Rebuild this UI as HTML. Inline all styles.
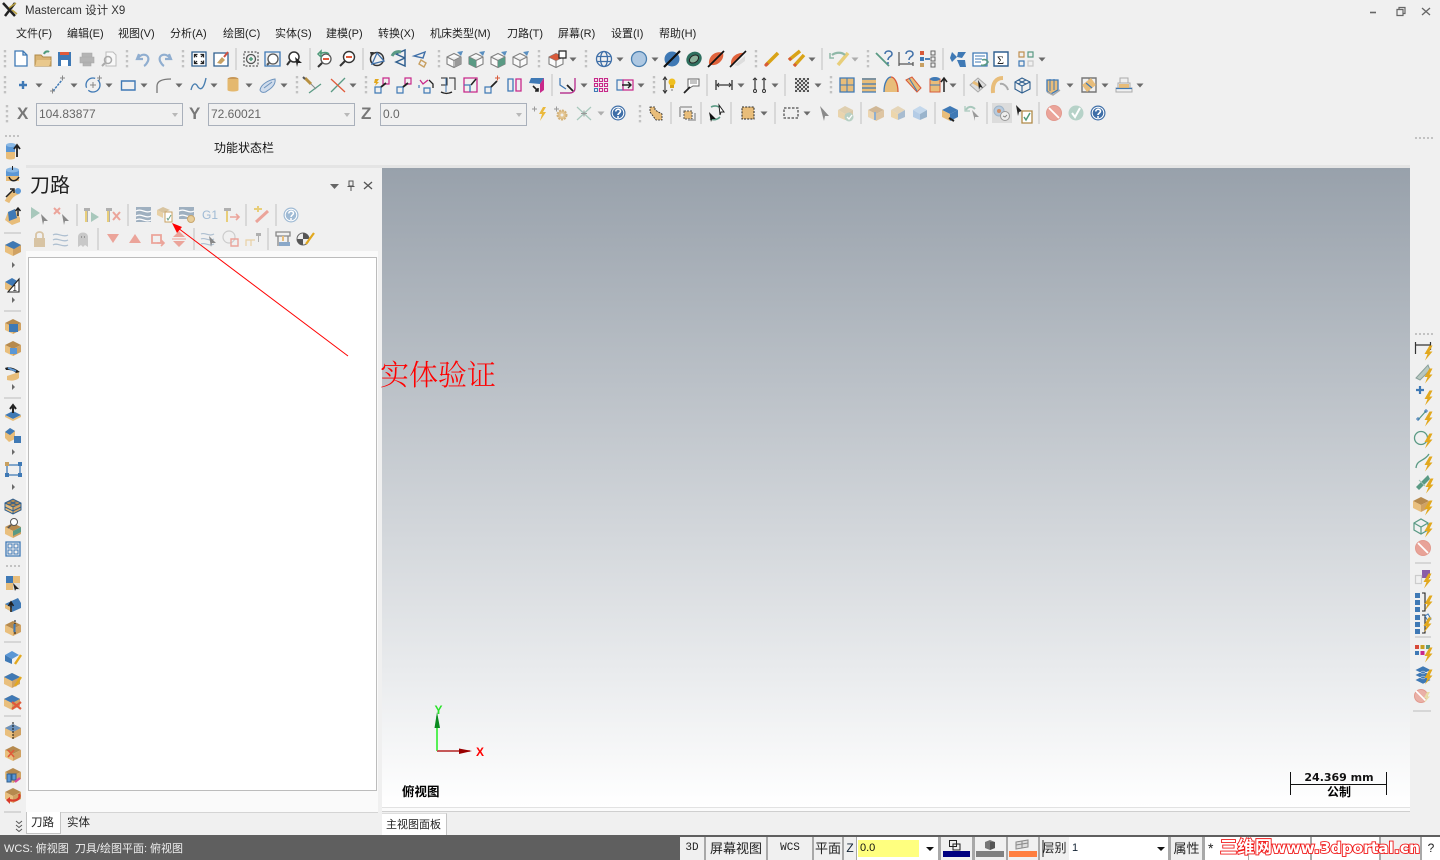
<!DOCTYPE html>
<html lang="zh"><head><meta charset="utf-8"><title>Mastercam</title>
<style>
html,body{margin:0;padding:0}
body{width:1440px;height:860px;overflow:hidden;background:#f0f0f0;position:relative;font-family:"Liberation Sans","Noto Sans CJK SC",sans-serif;font-size:11px;color:#222}
.a{position:absolute}
.t{position:absolute;white-space:nowrap;line-height:16px}
.m{top:26px;color:#222;font-size:11px}
.c{position:absolute;top:103px;height:21px;width:145px;border:1px solid #a9b0bb;background:#f0f0f0;color:#666;font-size:12px;line-height:21px;text-indent:2px}
.c:after{content:"";position:absolute;right:4px;top:9px;border:3.5px solid transparent;border-top:4px solid #b8b8b8}
.xyz{position:absolute;top:103px;font:bold 17px/22px "Liberation Sans",sans-serif;color:#777}
.b{position:absolute;top:837px;height:23px;background:#f0f0f0;color:#222;text-align:center;line-height:23px;font-size:12px;overflow:hidden}
</style></head><body>
<div class="a" style="left:0;top:165px;width:1440px;height:3px;background:#e4e4e4"></div>
<div class="a" style="left:0;top:165px;width:26px;height:670px;background:#f0f0f0"></div>
<div class="a" style="left:1410px;top:165px;width:30px;height:670px;background:#f0f0f0"></div>
<div class="a" style="left:382px;top:168px;width:1028px;height:639px;background:linear-gradient(#98a1ab,#fff)"></div>
<div class="a" style="left:382px;top:807px;width:1028px;height:1px;background:#e2e2e2"></div>
<div class="a" style="left:382px;top:808px;width:1028px;height:3px;background:#fbfbfb"></div>
<div class="a" style="left:382px;top:811px;width:1028px;height:1px;background:#cfcfcf"></div>
<div class="a" style="left:26px;top:251px;width:352px;height:561px;background:#fafafa"></div>
<div class="a" style="left:26px;top:812px;width:352px;height:1px;background:#d4d4d4"></div>
<div class="a" style="left:28px;top:257px;width:347px;height:532px;background:#fff;border:1px solid #bcbcbc"></div>
<div class="a" style="left:26px;top:812px;width:33px;height:21px;background:#fff;border:1px solid #c4c4c4;border-top:0"></div>
<div class="a" style="left:382px;top:813px;width:64px;height:22px;background:#fff;border-right:1px solid #c4c4c4;border-top:1px solid #ddd"></div>
<div class="a" style="left:0;top:835px;width:1440px;height:25px;background:#5f5f5f"></div>
<div class="a" style="left:680px;top:837px;width:760px;height:23px;background:#a8a8a8"></div>

<div class="t" style="left:25px;top:3px;font-size:11.5px;color:#333">Mastercam 设计 X9</div>
<div class="t m" style="left:16px">文件(F)</div><div class="t m" style="left:67px">编辑(E)</div><div class="t m" style="left:118px">视图(V)</div><div class="t m" style="left:170px">分析(A)</div><div class="t m" style="left:223px">绘图(C)</div><div class="t m" style="left:275px">实体(S)</div><div class="t m" style="left:326px">建模(P)</div><div class="t m" style="left:378px">转换(X)</div><div class="t m" style="left:430px">机床类型(M)</div><div class="t m" style="left:507px">刀路(T)</div><div class="t m" style="left:558px">屏幕(R)</div><div class="t m" style="left:611px">设置(I)</div><div class="t m" style="left:659px">帮助(H)</div>

<div class="xyz" style="left:17px">X</div><div class="c" style="left:36px">104.83877</div>
<div class="xyz" style="left:189px">Y</div><div class="c" style="left:208px">72.60021</div>
<div class="xyz" style="left:361px">Z</div><div class="c" style="left:380px">0.0</div>

<div class="t" style="left:214px;top:140px;font-size:12px;color:#111">功能状态栏</div>
<div class="t" style="left:30px;top:174px;font-size:20px;line-height:24px;color:#222">刀路</div>
<div class="t" style="left:31px;top:815px;font-size:11.5px">刀路</div>
<div class="t" style="left:67px;top:815px;font-size:11.5px">实体</div>
<div class="t" style="left:386px;top:817px;font-size:11px">主视图面板</div>
<div class="t" style="left:4px;top:841px;font-size:11px;color:#eee">WCS: 俯视图&nbsp; 刀具/绘图平面: 俯视图</div>

<div class="t" style="left:402px;top:784px;font-size:12.500px;font-weight:bold;color:#000">俯视图</div>
<div class="t" style="left:1291px;top:770px;width:96px;text-align:center;font-weight:bold;color:#111;font-family:'DejaVu Sans',sans-serif;font-size:11px">24.369 mm</div>
<div class="t" style="left:1291px;top:784px;width:96px;text-align:center;font-size:12px;font-weight:bold;color:#000">公制</div>
<div class="t" style="left:380px;top:355px;font-size:29px;line-height:38px;color:#f00;font-family:'Noto Serif CJK SC',serif;font-weight:300">实体验证</div>

<div class="b" style="left:680px;width:24px;font:11px/23px 'Liberation Mono',monospace">3D</div>
<div class="b" style="left:706px;width:60px;font-size:13px">屏幕视图</div>
<div class="b" style="left:768px;width:44px;font:11px/23px 'Liberation Mono',monospace">WCS</div>
<div class="b" style="left:814px;width:28px;font-size:13px">平面</div>
<div class="b" style="left:844px;width:12px;color:#123">Z</div>
<div class="b" style="left:857px;width:81px;background:#fff"></div>
<div class="b" style="left:858px;top:840px;height:17px;width:61px;background:#ffff7f;text-align:left;line-height:17px;text-indent:2px;font-size:11px;color:#111">0.0</div>
<div class="b" style="left:941px;width:31px"></div>
<div class="b" style="left:975px;width:31px"></div>
<div class="b" style="left:1008px;width:30px"></div>
<div class="b" style="left:1040px;width:29px;font-size:12px">层别</div>
<div class="b" style="left:1069px;width:99px;background:#fff;text-align:left;text-indent:3px;font-size:11px;color:#123">1</div>
<div class="b" style="left:1171px;width:31px;font-size:13px">属性</div>
<div class="b" style="left:1205px;width:43px;background:#fff;text-align:left;text-indent:3px;font-size:14px">*</div>
<div class="b" style="left:1249px;width:61px;background:#fff"></div>
<div class="b" style="left:1312px;width:67px;background:#fff"></div>
<div class="b" style="left:1381px;width:39px"></div>
<div class="b" style="left:1422px;width:18px;background:#fff">?</div>

<svg class="a" style="left:0;top:0" width="1440" height="860" viewBox="0 0 1440 860" fill="none">
<defs>
<path id="dd" d="M-3.5-1.5h7l-3.5 4z" fill="#6a6a6a"/>
<path id="dv" d="M0-9V10" stroke="#c2c2c2" stroke-width="2.4" stroke-dasharray="2.4 2.6"/>
<path id="sp" d="M0-11V11" stroke="#c8c8c8" stroke-width="1.2"/>
<path id="bolt" d="M1.500-7.500-3.500 1h3L-3 7.500 4.500-1.500H1.500L4.500-7.500z" fill="#e2a81e"/>
<g id="cube"><path d="M-8-3 0-7 8-3 0 1z" fill="#b68a4e"/><path d="M-8-3 0 1V8L-8 4z" fill="#e9bf7d"/><path d="M8-3 0 1V8L8 4z" fill="#d0a263"/></g>
<g id="wire"><path d="M-7-3 0-6.500 7-3V4L0 7.500-7 4zM-7-3 0 .5 7-3M0 .5V7.500" stroke="#808080" stroke-width="1.1" fill="#fafafa"/></g>
<g id="help"><circle r="7.500" fill="#3f6fa8"/><circle r="5.800" stroke="#fff"/><path d="M-2.200-1.500C-2.200-4.500 2.500-4.500 2.500-1.700 2.500 0 0 .2 0 2" stroke="#fff" stroke-width="1.600"/><circle cy="4" r="1" fill="#fff"/></g>
<g id="arr"><path d="M0-3 3 0 0 3" fill="#6a6a6a"/></g>
<g id="sq"><path d="M-6-6H6V6H-6z" stroke="#3f79b5" stroke-width="1.400"/></g>
<pattern id="ch" width="4" height="4" patternUnits="userSpaceOnUse" x="795" y="78"><rect width="4" height="4" fill="#ddd"/><rect width="2" height="2" fill="#555"/><rect x="2" y="2" width="2" height="2" fill="#555"/></pattern>
</defs>

<!-- logo + window controls -->
<path d="M3 3 15 16M15 3 5 16" stroke="#222" stroke-width="2.500"/><path d="M9 8 16 3M12 10 17 14" stroke="#b8a040" stroke-width="1.500"/>
<path d="M1370 12.500h6" stroke="#666" stroke-width="1.600"/>
<path d="M1397 9.500h6v6h-6zM1399 9.500V7.500h6v6h-2" stroke="#666" stroke-width="1.200"/>
<path d="M1422 8l8 7M1430 8l-8 7" stroke="#666" stroke-width="1.300"/>

<!-- separators toolbars -->
<g>
<use href="#dv" x="5" y="59"/><use href="#dv" x="127" y="59"/><use href="#dv" x="183" y="59"/><use href="#sp" x="236" y="59"/><use href="#sp" x="310" y="59"/><use href="#sp" x="363" y="59"/><use href="#dv" x="439" y="59"/><use href="#dv" x="539" y="59"/><use href="#dv" x="586" y="59"/><use href="#dv" x="756" y="59"/><use href="#sp" x="822" y="59"/><use href="#dv" x="868" y="59"/><use href="#sp" x="943" y="59"/>
<use href="#dv" x="5" y="85"/><use href="#dv" x="297" y="85"/><use href="#dv" x="366" y="85"/><use href="#sp" x="552" y="85"/><use href="#dv" x="654" y="85"/><use href="#sp" x="707" y="85"/><use href="#sp" x="785" y="85"/><use href="#dv" x="831" y="85"/><use href="#sp" x="964" y="85"/><use href="#sp" x="1037" y="85"/>
<use href="#dv" x="7" y="114"/><use href="#dv" x="640" y="114"/><use href="#sp" x="671" y="113"/><use href="#sp" x="701" y="113"/><use href="#sp" x="731" y="113"/><use href="#sp" x="775" y="113"/><use href="#sp" x="861" y="113"/><use href="#sp" x="935" y="113"/><use href="#sp" x="987" y="113"/><use href="#sp" x="1039" y="113"/>
</g>
<!-- dropdowns -->
<g>
<use href="#dd" x="573" y="59"/><use href="#dd" x="620" y="59"/><use href="#dd" x="655" y="59"/><use href="#dd" x="812" y="59"/><use href="#dd" x="855" y="59" opacity=".5"/><use href="#dd" x="1042" y="59"/>
<use href="#dd" x="39" y="85"/><use href="#dd" x="74" y="85"/><use href="#dd" x="109" y="85"/><use href="#dd" x="144" y="85"/><use href="#dd" x="179" y="85"/><use href="#dd" x="214" y="85"/><use href="#dd" x="249" y="85"/><use href="#dd" x="284" y="85"/><use href="#dd" x="353" y="85"/><use href="#dd" x="584" y="85"/><use href="#dd" x="641" y="85"/><use href="#dd" x="741" y="85"/><use href="#dd" x="775" y="85"/><use href="#dd" x="818" y="85"/><use href="#dd" x="953" y="85"/><use href="#dd" x="1070" y="85"/><use href="#dd" x="1105" y="85"/><use href="#dd" x="1140" y="85"/>
<use href="#dd" x="601" y="113" opacity=".5"/><use href="#dd" x="764" y="113"/><use href="#dd" x="807" y="113"/>
</g>

<!-- row 1 -->
<path d="M15 51H23L27 55V66H15ZM23 51V55H27" fill="#fff" stroke="#3f79b5" stroke-width="1.300"/>
<path d="M35 55h6l2 2h8v9H35z" fill="#d9b474" stroke="#b08a48"/><path d="M37 60H51L49 66H35z" fill="#e9c88c"/><path d="M44 54C45 51 48 51 49 52" stroke="#4f9a7a" stroke-width="2"/>
<path d="M58 52H71V66H58z" fill="#3f79b5"/><path d="M60 52H69V55H60z" fill="#e05a3a"/><path d="M61 60H68V66H61z" fill="#fff"/>
<path d="M82 53H92V57H82zM80 57H94V63H80zM83 62H91V66H83z" fill="#b4b4b4" stroke="#a8a8a8" stroke-width=".6"/>
<path d="M108 52H113L116 55V66H106V52z" stroke="#bbb" fill="#f8f8f8"/><circle cx="108" cy="60" r="3.500" stroke="#aaa" stroke-width="1.500"/><path d="M105 63 102 66" stroke="#aaa" stroke-width="2"/>
<path d="M139 54 137 59 143 59M138 58C143 52 150 55 148 61 147 63 146 65 144 66" stroke="#90aed0" stroke-width="2.200"/>
<path d="M169 54 171 59 165 59M170 58C165 52 158 55 160 61 161 63 162 65 164 66" stroke="#90aed0" stroke-width="2.200"/>
<path d="M192 52H206V66H192z" fill="#fff" stroke="#2f5f8f" stroke-width="1.300"/><path d="M195 55l2 2M203 55l-2 2M195 63l2-2M203 63l-2-2" stroke="#222" stroke-width="1.200"/><path d="M194.500 57.500v-3h3M203.500 57.500v-3h-3M194.500 60.500v3h3M203.500 60.500v3h-3" stroke="#222" stroke-width="1.300"/>
<path d="M214 53H228V66H214z" fill="#fff" stroke="#2f5f8f" stroke-width="1.300"/><path d="M217 63 222 57 225 60 221 64z" fill="#c8a062"/><path d="M224 57 228 52" stroke="#d05040" stroke-width="2"/>
<path d="M244 52H258V66H244z" stroke="#333" stroke-dasharray="2 1.500"/><circle cx="251" cy="59" r="4.500" stroke="#555" stroke-width="1.300"/><path d="M249 59h4M251 57v4" stroke="#4f9a7a" stroke-width="1.500"/>
<path d="M265 52H280V66H265z" stroke="#3f79b5" stroke-width="1.300"/><circle cx="273" cy="59" r="5" stroke="#555" stroke-width="1.300" fill="#fff"/><path d="M269 63 267 65" stroke="#555" stroke-width="2"/>
<circle cx="294" cy="57" r="5" stroke="#333" stroke-width="1.500" fill="#fff"/><path d="M290 61 287 65" stroke="#333" stroke-width="2"/><path d="M295 57 302 63 298 63 297 67z" fill="#222"/>
<circle cx="326" cy="59" r="5" stroke="#555" stroke-width="1.300" fill="#fff"/><path d="M323 59h6" stroke="#e05a3a" stroke-width="2"/><path d="M318 54 321 51V57z M320 54C323 52 327 52 329 54" stroke="#4f9a7a" stroke-width="1.500"/><path d="M322 63 318 67" stroke="#333" stroke-width="2"/>
<circle cx="349" cy="57" r="5.500" stroke="#333" stroke-width="1.400" fill="#fff"/><path d="M346 57h6" stroke="#e05a3a" stroke-width="2"/><path d="M345 61 340 66" stroke="#333" stroke-width="2"/>
<circle cx="377" cy="59" r="6.500" stroke="#333" stroke-width="1.500"/><path d="M372 64 377 53 384 61z" fill="#f0f0f0" stroke="#3f6fa8" stroke-width="1.300"/><path d="M370 52 374 52 371 56z" fill="#333"/>
<path d="M396 54 405 50 405 58zM396 62 405 58 405 66z" fill="#f0f0f0" stroke="#2f5f8f" stroke-width="1.500"/><path d="M392 56C394 52 397 51 401 52" stroke="#5a9a84" stroke-width="3"/>
<path d="M414 56 425 52 423 58z" stroke="#3f6fa8" stroke-width="1.400"/><path d="M421 60 426 63 424 67 419 64z" stroke="#c8a062" stroke-width="1.400"/>
<g transform="translate(454,60)"><use href="#wire"/><path d="M1 .5 7-3V4L1 7z" fill="#999"/><path d="M3-8 9-9 7-4z" fill="#5a8fc0"/></g>
<g transform="translate(476,60)"><use href="#wire"/><path d="M-7-3 0 .5V7.500L-7 4z" fill="#5a9a84"/><path d="M3-8 9-9 7-4z" fill="#5a8fc0"/></g>
<g transform="translate(498,60)"><use href="#wire"/><path d="M0 .5 7-3V4L0 7.500z" fill="#5a9a84"/><path d="M3-8 9-9 7-4z" fill="#5a8fc0"/></g>
<g transform="translate(520,60)"><use href="#wire"/><path d="M3-8 9-9 7-4z" fill="#5a8fc0"/></g>
<g transform="translate(556,60)"><use href="#wire"/><path d="M-7-3 0-6.500 7-3 0 .5z" fill="#d85a3a"/></g><path d="M559 51H566V58H559z" fill="#fff" stroke="#222" stroke-width="1.200"/>
<g transform="translate(604,59)" stroke="#3f6fa8" stroke-width="1.300"><circle r="7.500"/><ellipse rx="3.500" ry="7.500"/><path d="M-7-2.500H7M-7 2.500H7"/></g>
<circle cx="639" cy="59" r="7.500" fill="#aec8e2" stroke="#4a7fb0" stroke-width="1.300"/>
<circle cx="672" cy="59" r="7.500" fill="#3f79b5"/><path d="M664 67 680 51" stroke="#111" stroke-width="2.200"/>
<ellipse cx="694" cy="59" rx="8" ry="7" fill="#2f6f5f" transform="rotate(-35 694 59)"/><ellipse cx="694" cy="59" rx="5" ry="3.500" fill="#8ab09a" stroke="#222" transform="rotate(-35 694 59)"/>
<path d="M709 64C708 56 716 50 723 53 725 60 716 68 709 64z" fill="#e0633c"/><path d="M708 67 724 51" stroke="#111" stroke-width="1.800"/>
<path d="M731 63C731 56 738 52 745 53L731 65z" fill="#e0633c"/><path d="M745 56V61L738 66 734 65z" fill="#ddd"/><path d="M730 67 746 51" stroke="#111" stroke-width="1.600"/>
<path d="M766 65 778 53" stroke="#d9a317" stroke-width="3.500"/><path d="M765 66 768 63" stroke="#d85a3a" stroke-width="3"/>
<path d="M789 60 800 51M794 66 804 55" stroke="#d9a317" stroke-width="3.500"/><path d="M789 60 791 58M794 66 796 64" stroke="#d85a3a" stroke-width="3"/>
<path d="M838 65 848 53" stroke="#e8ce7a" stroke-width="3.500"/><path d="M832 55C836 52 842 52 845 55" stroke="#8fb8a8" stroke-width="2.200"/><path d="M830 53v5h4" stroke="#8fb8a8" stroke-width="1.500"/>
<path d="M876 53 889 66" stroke="#5a9a84" stroke-width="1.800"/><path d="M885 54C885 50 892 50 892 54 892 57 888 56 888 60M888 62v2" stroke="#3f6fa8" stroke-width="1.500"/>
<path d="M899 52V66M899 64H913M913 62V66M899 62" stroke="#555" stroke-width="1.200"/><path d="M906 54C906 50 913 50 913 54 913 57 909 56 909 60M909 62v1" stroke="#3f6fa8" stroke-width="1.500"/>
<path d="M920 51H924V55H920z" fill="#d85a3a"/><path d="M920 57H924V61H920z" fill="#3f79b5"/><path d="M920 63H924V67H920z" fill="#c8a062"/><path d="M925 59H930" stroke="#3f79b5" stroke-width="1.800"/><path d="M931 51H935V55H931zM931 57H935V61H931zM931 63H935V67H931z" stroke="#666"/>
<path d="M952 52 957 57 952 62 950 58zM958 52 966 52 962 58 957 57zM957 60 965 60 966 67 960 67z" fill="#3f79b5"/>
<path d="M973 53H987V66H973z" stroke="#3f79b5" stroke-width="1.300" fill="#fff"/><path d="M975 56H985M975 59H982M975 62H981" stroke="#3f79b5"/><path d="M982 60C985 59 987 60 988 62 986 65 984 66 981 65" stroke="#5a9a84" stroke-width="1.600"/>
<path d="M994 52H1008V66H994z" stroke="#2f5f8f" stroke-width="1.400" fill="#fff"/><text x="997" y="64" font-family="Liberation Serif" font-size="12" fill="#222">Σ</text>
<path d="M1019 52H1024V57H1019z" stroke="#c09050" stroke-width="1.200"/><path d="M1028 52H1033V57H1028z" stroke="#5a9a84" stroke-width="1.200"/><path d="M1019 61H1024V66H1019z" stroke="#3f79b5" stroke-width="1.200"/><path d="M1028 61H1033V66H1028z" stroke="#c8c8c8" stroke-width="1.200"/>

<!-- row 2 -->
<path d="M19 85h8M23 81v8" stroke="#3f79b5" stroke-width="2.400"/>
<path d="M53 91 62 80" stroke="#3f79b5" stroke-width="1.500" stroke-dasharray="2.500 1"/><path d="M60 78h5M62.500 75.500v5M50 91h5M52.500 88.500v5" stroke="#888"/>
<circle cx="93" cy="85" r="7" stroke="#3f79b5" stroke-width="1.300" stroke-dasharray="16 3"/><path d="M90 85h6M93 82v6" stroke="#888"/><path d="M97 78h5M99.500 75.500v5" stroke="#888"/>
<path d="M121.500 81H135V90H121.500z" stroke="#3f79b5" stroke-width="1.400"/>
<path d="M157 93V86C157 82 161 79 171 79" stroke="#777" stroke-width="1.300"/>
<path d="M191 90C193 82 196 83 198 87 201 91 204 88 206 78" stroke="#4a7fb0" stroke-width="1.400"/>
<ellipse cx="233" cy="79" rx="5.500" ry="2" fill="#c89858"/><path d="M227.500 79V90C227.500 92 238.500 92 238.500 90V79z" fill="#e4b86e"/>
<path d="M260 90C261 84 269 80 275 79 276 84 272 88 267 91 265 93 261 93 260 90z" fill="#d0dcec" stroke="#6d93bd"/><path d="M264 88 272 82" stroke="#6d93bd"/>
<path d="M305 78 311 84" stroke="#b89040" stroke-width="3"/><path d="M303 77 305 79" stroke="#555" stroke-width="2"/><path d="M309 93 321 84" stroke="#5a9a84" stroke-width="1.300"/><path d="M311 84 316 89" stroke="#888"/>
<path d="M331 92 345 78" stroke="#5a9a84" stroke-width="1.300"/><path d="M331 79 345 92" stroke="#e05a3a" stroke-width="1.300"/>
<path d="M375 79l-1 4h2l-1 3 4-4h-2l2-3z" fill="#e2a81e"/><path d="M383 78H389V84H383z" stroke="#c8288a" stroke-width="1.200"/><path d="M375 87H381V93H375z" stroke="#3f79b5" stroke-width="1.200"/><path d="M381 87 386 83" stroke="#222" stroke-width="1.800"/>
<path d="M405 78H411V84H405z" stroke="#c8288a" stroke-width="1.200"/><path d="M397 87H403V93H397z" stroke="#3f79b5" stroke-width="1.200"/><path d="M403 87 408 83" stroke="#222" stroke-width="1.800"/>
<path d="M420 80 423 84 428 80" stroke="#c8288a" stroke-width="1.300"/><path d="M424 88H430V93H424zM419 85 419 88" stroke="#3f79b5" stroke-width="1.200"/><path d="M429 80 433 84V88" stroke="#222" stroke-width="1.300"/>
<path d="M441 78H447V85H441M449 78H455V90" stroke="#222"/><path d="M446 78V92" stroke="#3f79b5"/><path d="M441 92C445 94 448 94 452 92" stroke="#222" stroke-width="1.500"/>
<path d="M464 78H477V92H464z" stroke="#c8288a" stroke-width="1.300"/><path d="M464 85H470V92" stroke="#3f79b5" stroke-width="1.300"/><path d="M471 85 476 79" stroke="#222" stroke-width="1.500"/>
<path d="M485 87H491V93H485z" stroke="#3f79b5" stroke-width="1.200"/><path d="M491 87 497 81" stroke="#222" stroke-width="1.800"/><path d="M495 78h5M497.500 75.500v5" stroke="#d85a3a"/>
<path d="M508 79H513V91H508z" stroke="#3f79b5" stroke-width="1.300"/><path d="M516 79H521V91H516z" stroke="#c8288a" stroke-width="1.300"/>
<path d="M531 78 544 78 540 84 529 83z" fill="#3f79b5"/><path d="M544 78V90L540 93V84z" fill="#c8288a"/><path d="M533 86 538 91M538 88v3h-3" stroke="#222" stroke-width="1.600"/>
<path d="M560 78V85L566 89M575 78V88C575 91 573 93 570 93H560" stroke="#3f79b5" stroke-width="1.200"/><path d="M575 78V88C575 91 573 93 570 93H560" stroke="#c8288a" stroke-width="1.200"/><path d="M567 85 573 91" stroke="#222" stroke-width="1.800"/>
<g stroke="#c8288a" stroke-width="1.100"><path d="M594.500 78.500h3v3h-3zM599.500 78.500h3v3h-3zM604.500 78.500h3v3h-3zM594.500 83.500h3v3h-3zM599.500 83.500h3v3h-3zM604.500 83.500h3v3h-3zM599.500 88.500h3v3h-3zM604.500 88.500h3v3h-3z"/><path d="M594.500 88.500h3v3h-3z" stroke="#3f79b5"/></g>
<path d="M617 80H623V90H617z" stroke="#3f79b5" stroke-width="1.200"/><path d="M623 80H633V90H623z" stroke="#c8288a" stroke-width="1.200"/><path d="M622 85H631M628 82 631 85 628 88" stroke="#222" stroke-width="1.400"/>
<path d="M665 78V92M663 80 665 77 667 80M663 90 665 93 667 90" stroke="#333" stroke-width="1.100"/><circle cx="672" cy="82" r="3.500" fill="#f0c020"/><path d="M670 85h4V88h-4z" fill="#d9a317"/><path d="M671 90h2" stroke="#777"/>
<path d="M688 79H699V86H693L688 89z" stroke="#666" fill="#fff"/><path d="M690 81h7M690 83h7" stroke="#888"/><path d="M684 93 690 87" stroke="#222" stroke-width="1.800"/>
<path d="M716 80V90M732 80V90M717 85H731" stroke="#333" stroke-width="1.300"/><path d="M719 83 717 85 719 87M729 83 731 85 729 87" stroke="#333"/>
<path d="M755 78V92M764 78V92" stroke="#333" stroke-width="1.200"/><circle cx="755" cy="91" r="1.500" fill="#fff" stroke="#333"/><circle cx="764" cy="91" r="1.500" fill="#fff" stroke="#333"/><path d="M753 80 755 78 757 80M762 80 764 78 766 80" stroke="#333"/>
<path d="M795 78H809V92H795z" fill="url(#ch)"/>
<path d="M840 78H854V92H840z" fill="#e8bd7a" stroke="#3f79b5" stroke-width="1.300"/><path d="M847 78V92M840 85H854" stroke="#3f79b5"/>
<path d="M862 78H876V92H862z" fill="#e8bd7a"/><path d="M862 79H876M862 84H876M862 88H876M862 92H876" stroke="#3f79b5" stroke-width="1.300"/>
<path d="M884 92C884 82 888 77 891 77 894 77 898 82 898 92z" fill="#e8bd7a"/><path d="M884 92C884 82 888 77 891 77" stroke="#3f79b5" stroke-width="1.300"/><path d="M891 77C894 77 898 82 898 92" stroke="#d85a3a" stroke-width="1.300"/>
<path d="M906 80 912 77 921 88 917 92z" fill="#e8bd7a" stroke="#d85a3a"/><path d="M909 78 917 91" stroke="#3f79b5"/>
<path d="M930 79H940V92H930z" fill="#e8bd7a" stroke="#d85a3a"/><ellipse cx="935" cy="79" rx="5" ry="2" fill="#3f79b5"/><path d="M930 85H940" stroke="#3f79b5"/><path d="M944 92V79M941 82 944 78 947 82" stroke="#222" stroke-width="1.500"/>
<path d="M970 85 978 78 986 85 978 92z" fill="#ddd" stroke="#aaa"/><path d="M973 82 980 86" stroke="#e8bd7a" stroke-width="3"/><path d="M978 80 983 88 980 87 979 90z" fill="#222"/>
<path d="M993 93C992 83 996 78 1003 78" stroke="#e8bd7a" stroke-width="4"/><path d="M1000 84C1003 83 1007 86 1008 90" stroke="#aaa" stroke-width="2"/>
<path d="M1015 82 1022 78 1030 82V89L1022 93 1015 89zM1015 82 1022 86 1030 82M1022 86V93M1018 80 1026 84M1026 80 1018 84" stroke="#2f5f8f" stroke-width="1.100"/>
<path d="M1047 80H1058V90L1051 94 1047 91z" fill="#e8bd7a" stroke="#3f79b5" stroke-width="1.300"/><path d="M1050 79V91M1054 79V90" stroke="#3f79b5"/><path d="M1047 92 1053 95 1060 90" stroke="#aaa" stroke-width="1.500"/>
<path d="M1082 78H1096V92H1082z" stroke="#777" stroke-width="1.400"/><path d="M1082 85H1096M1089 78V92" stroke="#777"/><path d="M1082 85 1091 78 1096 85 1087 92z" fill="#e8bd7a"/><path d="M1086 83 1092 88" stroke="#3f79b5" stroke-width="1.200"/>
<path d="M1120 78H1128V83H1120zM1118 83H1130V88H1118zM1116 88H1132V92H1116z" stroke="#aaa"/><path d="M1119 84H1129V88H1119z" fill="#e8bd7a"/><path d="M1116 88.500H1132" stroke="#3f79b5" stroke-width="1.200"/>

<!-- row 3 -->
<path d="M532 109h5M534.500 106.500v5" stroke="#999"/><path d="M543 107 539 114h3l-2 7 6-9h-3l3-5z" fill="#eab93d"/>
<path d="M554 109h5M556.500 106.500v5" stroke="#999"/><circle cx="562" cy="115" r="4.500" fill="#e3c592" stroke="#d4b27a" stroke-width="2" stroke-dasharray="2 1"/><circle cx="562" cy="115" r="1.500" fill="#f0f0f0"/>
<path d="M577 107 591 120M591 107 577 120" stroke="#a8c8bc" stroke-width="1.200"/><path d="M581 113.500h6M584 110.500v6" stroke="#999"/>
<use href="#help" x="618" y="113"/>
<path d="M650 107H655V110L662 114V120H656L650 112z" fill="#e8bd7a" stroke="#222" stroke-width=".8" stroke-dasharray="2 1"/>
<path d="M680 107H692M680 107V117" stroke="#aaa" stroke-width="1.800"/><path d="M684 111H692V119H684z" fill="#e8bd7a" stroke="#555" stroke-dasharray="2 1"/><path d="M695 113V120H688" stroke="#aaa" stroke-width="1.800"/>
<path d="M711 107C715 105 719 106 721 109" stroke="#5a9a84" stroke-width="1.600"/><path d="M720 117C717 120 713 120 710 119" stroke="#5a9a84" stroke-width="1.600"/><path d="M709 112 716 119 712 119 711 122z" fill="#111"/><path d="M719 105 724 112 721 112 720 115z" fill="#fff" stroke="#222"/>
<path d="M742 107H754V119H742z" fill="#e8bd7a" stroke="#222" stroke-dasharray="2 1.200"/>
<path d="M784 108H798V118H784z" stroke="#222" stroke-dasharray="2.500 1.500"/>
<path d="M820 106 829 116 825 116 824 121z" fill="#8a8a8a"/>
<path d="M838 110 845 106 853 110 845 114z" fill="#dfcfb0"/><path d="M838 110 845 114V120L838 117z" fill="#e9d4ad"/><path d="M853 110 845 114V120L853 117z" fill="#d9c8a8"/><circle cx="849" cy="117" r="4.500" fill="#b8d0c4"/><path d="M847 117 849 119 852 115" stroke="#fff" stroke-width="1.300"/>
<g transform="translate(876,113)" opacity=".55"><use href="#cube"/><path d="M-1-1V7" stroke="#3f79b5" stroke-width="2"/></g>
<g transform="translate(898,113)"><path d="M-7-3 0-7 7-3 0 1z" fill="#e5d5b8"/><path d="M-7-3 0 1V7L-7 4z" fill="#ecd6ac"/><path d="M7-3 0 1V7L7 4z" fill="#a8bcd0"/></g>
<g transform="translate(920,113)"><path d="M-7-3 0-7 7-3 0 1z" fill="#c4d8ec"/><path d="M-7-3 0 1V7L-7 4z" fill="#b4cce6"/><path d="M7-3 0 1V7L7 4z" fill="#9ab4cc"/></g>
<g transform="translate(950,113)"><path d="M-8-3 0-7 8-3 0 1z" fill="#3f79b5"/><path d="M-8-3 0 1V8L-8 4z" fill="#e8bd7a"/><path d="M8-3 0 1V8L8 4z" fill="#3f79b5"/><path d="M-1 5 4 8" stroke="#222" stroke-width="2"/></g>
<path d="M966 110C968 106 972 106 975 109" stroke="#a8c8bc" stroke-width="2"/><path d="M965 106v5h5" stroke="#a8c8bc" stroke-width="1.200"/><path d="M972 110 979 117 975 117 975 121z" fill="#999"/>
<rect x="992" y="103" width="20" height="20" fill="#dcdcdc"/><circle cx="999" cy="111" r="5" fill="#b8cadc" stroke="#9fb4c8"/><circle cx="999" cy="111" r="2" fill="#d08f68"/><circle cx="1005" cy="116" r="4.500" fill="#eee" stroke="#999"/><path d="M1003 116l2 1 2-2" stroke="#888"/>
<path d="M1016 105 1022 111 1019 112 1018 116z" fill="#222"/><path d="M1022 111H1032V123H1022z" fill="#fff" stroke="#b08a48" stroke-width="1.300"/><path d="M1024 117 1026 120 1030 113" stroke="#4f9a7a" stroke-width="1.500"/>
<circle cx="1054" cy="113" r="7.500" fill="#eba49a" stroke="#e2998e"/><path d="M1049 108 1059 118" stroke="#fff" stroke-width="1.800"/>
<circle cx="1076" cy="113" r="7.500" fill="#b6d2c8"/><path d="M1072 113 1075 117 1080 108" stroke="#fff" stroke-width="2"/>
<use href="#help" x="1098" y="113"/>

<!-- panel controls -->
<path d="M330 184h9l-4.500 5z" fill="#666"/>
<path d="M349 181H353V186H349zM347.500 186.500h7M351 187V191" stroke="#555"/>
<path d="M364 182 372 189M372 182 364 189" stroke="#555" stroke-width="1.300"/>

<!-- panel row1 -->
<g><use href="#sp" x="77" y="215"/><use href="#sp" x="128" y="215"/><use href="#sp" x="246" y="215"/><use href="#sp" x="276" y="215"/><use href="#sp" x="98" y="239"/><use href="#sp" x="194" y="239"/><use href="#sp" x="268" y="239"/></g>
<path d="M31 207V219L40 213z" fill="#a8c8bc"/><path d="M41 214 48 221 44 221 43 225z" fill="#888"/>
<path d="M54 208 60 214M60 208 54 214" stroke="#eba49a" stroke-width="2"/><path d="M62 214 69 221 65 221 64 225z" fill="#888"/>
<path d="M84 208H90V211H88V222H86V211H84z" fill="#b0b0b0"/><path d="M86 211V222" stroke="#e8ce7a" stroke-width="2"/><path d="M91 212V222L99 217z" fill="#a8c8bc"/>
<path d="M106 208H112V211H110V222H108V211H106z" fill="#b0b0b0"/><path d="M108 211V222" stroke="#e8ce7a" stroke-width="2"/><path d="M113 212 120 220M120 212 113 220" stroke="#eba49a" stroke-width="2"/>
<path d="M136 207H151V222H136z" fill="#9fb0c0"/><path d="M136 211C141 208 146 214 151 211M136 216C141 213 146 219 151 216M136 220C141 217 146 223 151 220" stroke="#fff" stroke-width="1.200"/>
<path d="M157 210 163 207 170 210 163 213z" fill="#d8c4a0"/><path d="M157 210 163 213V218L157 215z" fill="#e8d0a4"/><path d="M165 212H172V222H165z" fill="#fff" stroke="#c8a060"/><path d="M167 218 168 220 171 215" stroke="#6aa08a"/>
<path d="M179 207H194V219H179z" fill="#9fb0c0"/><path d="M179 211C184 208 189 214 194 211M179 216C184 213 189 219 194 216" stroke="#fff" stroke-width="1.200"/><circle cx="191" cy="219" r="3.500" fill="#e8ce9a" stroke="#caa76e"/>
<text x="202" y="219" font-family="Liberation Sans" font-size="12" fill="#9fbad4">G1</text>
<path d="M224 208H231V211H228V222H226V211H224z" fill="#b0b0b0"/><path d="M227 211V222" stroke="#e8ce7a" stroke-width="2"/><path d="M230 217H238M236 214 239 217 236 220" stroke="#eba49a" stroke-width="1.600"/>
<path d="M256 222 268 211" stroke="#eba49a" stroke-width="3"/><path d="M254 209H262M258 206V212" stroke="#e8ce7a" stroke-width="2"/>
<circle cx="291" cy="215" r="7.500" fill="#9fbad4"/><circle cx="291" cy="215" r="5.800" stroke="#fff"/><path d="M288.800 213.500C288.800 210.500 293.500 210.500 293.500 213.300 293.500 215 291 215.200 291 217" stroke="#fff" stroke-width="1.500"/><circle cx="291" cy="219" r="1" fill="#fff"/>
<!-- panel row2 -->
<path d="M34 238H45V247H34z" fill="#d8c4a4"/><path d="M36 238V235C36 231 43 231 43 235V238" stroke="#d8c4a4" stroke-width="1.800"/>
<path d="M53 235C57 232 63 238 68 235M53 240C57 237 63 243 68 240M53 245C57 242 63 248 68 245" stroke="#aebfd0" stroke-width="1.200"/>
<path d="M78 247V237C78 231 88 231 88 237V247L85 245 83 247 81 245z" fill="#c8c8c8"/><path d="M81 237h1M84 237h1" stroke="#666"/>
<path d="M107 234H119L113 243z" fill="#eba49a"/>
<path d="M129 243H141L135 234z" fill="#eba49a"/>
<path d="M152 235H161V243H152z" stroke="#eba49a" stroke-width="1.800"/><path d="M157 243H163M161 240 164 243 161 246" stroke="#eba49a" stroke-width="1.600"/>
<path d="M173 237 179 231 185 237zM173 241 179 247 185 241z" fill="#eba49a"/><path d="M172 239H186" stroke="#eba49a"/>
<path d="M201 234C205 232 209 237 214 234M201 239C205 237 209 242 214 239M201 244C205 242 209 247 214 244" stroke="#aebfd0" stroke-width="1.200"/><path d="M209 236 216 243 212 243 211 247z" fill="#888"/>
<circle cx="229" cy="237" r="6" stroke="#ccc" stroke-width="1.200"/><path d="M231 239H238V246H231z" stroke="#eba49a" stroke-width="1.400"/>
<path d="M246 246V240H255M251 240V246" stroke="#e8d0a4" stroke-width="1.200"/><path d="M256 233H261V236H259V242H258V236H256z" fill="#b0b0b0"/>
<path d="M276 232H290V236H276zM278 236V246M288 236V246" stroke="#888" stroke-width="1.300"/><path d="M279 246H290V242H279z" fill="#8aa8c8"/><path d="M283 236 283 241" stroke="#e8bd7a" stroke-width="2"/>
<circle cx="303" cy="239" r="6" fill="#eee" stroke="#666"/><path d="M303 233A6 6 0 0 1 309 239H303V245A6 6 0 0 1 297 239H303z" fill="#555"/><path d="M306 244 314 233" stroke="#e2a81e" stroke-width="2.200"/>

<!-- left toolbar -->
<g>
<path d="M5 136h14" stroke="#c2c2c2" stroke-width="2" stroke-dasharray="2 2"/>
<path d="M6 145V158C6 160 15 160 15 158V145z" fill="#e8bd7a"/><path d="M6 145V152H15V145z" fill="#5b97d5"/><ellipse cx="11" cy="145" rx="5" ry="2" fill="#8ab8e4"/><path d="M17 157V146M14 149 17 145 20 149" stroke="#222" stroke-width="1.800"/>
<path d="M6 170V181H19V170z" fill="#e8bd7a"/><path d="M6 170V176H19V170z" fill="#5b97d5"/><ellipse cx="12.500" cy="170" rx="6.500" ry="2.500" fill="#8ab8e4"/><path d="M9 177C11 182 16 182 19 177" stroke="#222" stroke-width="1.500"/><path d="M12.500 166V170" stroke="#222"/>
<path d="M7 202C10 196 14 193 18 192" stroke="#e8bd7a" stroke-width="5"/><circle cx="18" cy="191" r="3" fill="#5b97d5"/><path d="M6 197 13 190M10 189H14V193" stroke="#222" stroke-width="1.500"/>
<path d="M5 220 8 212 15 209 20 218 20 222 12 225z" fill="#e8bd7a"/><path d="M8 212 15 209 17 218 9 221z" fill="#3f79b5"/><path d="M18 216V209M15.500 211 18 208 20.500 211" stroke="#222" stroke-width="1.500"/>
<path d="M4 233H21" stroke="#bbb"/>
<g transform="translate(13,248)"><use href="#cube"/><path d="M-8-3 0-7 8-3 1 1z" fill="#3f79b5"/></g><use href="#arr" x="12" y="265"/>
<g transform="translate(12,285)"><path d="M-7-3 0-7 7-3 0 1z" fill="#3f79b5"/><path d="M-7-3 0 1V7L-7 4z" fill="#e8bd7a"/></g><path d="M8 292 19 279V292z" fill="#fff" stroke="#222" stroke-width="1.100"/><text x="12.500" y="291" font-size="8" font-family="Liberation Sans" fill="#222">1</text><use href="#arr" x="12" y="300"/>
<path d="M4 311H21" stroke="#bbb"/>
<g transform="translate(13,326)"><use href="#cube"/><path d="M-4-2H5V6H-4z" fill="#3f79b5"/></g>
<g transform="translate(13,348)"><use href="#cube"/><path d="M-3 0H4V6H-3z" fill="#5b97d5"/></g>
<path d="M7 376 19 372V378C16 381 10 381 7 380z" fill="#e8bd7a"/><path d="M5 368C9 366 15 368 20 372L16 373C13 370 9 370 6 370z" fill="#222"/><path d="M8 368 16 371" stroke="#5b97d5" stroke-width="2"/><use href="#arr" x="12" y="387"/>
<path d="M4 398H21" stroke="#bbb"/>
<path d="M5 415 13 411 21 415 13 419z" fill="#3f79b5"/><path d="M5 415 13 419V421L5 417zM21 415 13 419V421L21 417z" fill="#e8bd7a"/><path d="M13 413V406M10 409 13 405 16 409" stroke="#222" stroke-width="2"/>
<path d="M5 432 10 428 15 431 15 439 9 442 5 438z" fill="#e8bd7a"/><path d="M10 428 15 431 10 435 5 432z" fill="#3f79b5"/><path d="M14 436H21V443H14z" fill="#3f79b5"/><use href="#arr" x="12" y="452"/>
<path d="M7 466H20V476H7z" stroke="#3f79b5" stroke-width="1.300" transform="translate(0,-1)"/><path d="M5 462H9V466H5z" fill="#c8a060"/><path d="M18 462H22V466H18zM5 473H9V477H5zM18 473H22V477H18z" fill="#3f79b5"/><use href="#arr" x="12" y="487"/>
<g transform="translate(13,506)"><use href="#cube"/><path d="M-8-3 0-7 8-3V4L0 8-8 4zM-8-3 0 1 8-3M0 1V8M-4-5 4-1M4-5-4-1M-8 1 0 5 8 1" stroke="#2f5f8f" stroke-width="1"/></g>
<g transform="translate(13,530)"><use href="#cube" /><circle cx="1" cy="-8" r="3.500" stroke="#555" fill="#fff"/><path d="M-2-5-5-2" stroke="#555" stroke-width="1.500"/><path d="M0 1 8-3V2L0 6z" fill="#5a9a84"/></g>
<path d="M6 542H20V556H6z" stroke="#3f79b5" stroke-width="1.300"/><path d="M8 544H12V548H8zM8 550H12V554H8zM14 544H18V548H14zM14 550H18V554H14z" stroke="#3f79b5"/>
<path d="M6 566h14" stroke="#c2c2c2" stroke-width="2" stroke-dasharray="2 2"/>
<path d="M6 576H13V583H6z" fill="#3f79b5"/><path d="M13 576H20V583H13z" fill="#e8bd7a"/><path d="M6 583H13V590H6z" fill="#e8bd7a"/><path d="M13 583H20V590H13z" fill="#ddd"/><path d="M13 583 19 589 16 589 15 591z" fill="#222"/>
<path d="M5 604 18 598 21 603 21 608 12 612 5 608z" fill="#3f79b5"/><path d="M5 604 12 608V612L5 608z" fill="#e8bd7a"/><path d="M11 612V603M8.500 606 11 602 13.500 606" stroke="#222" stroke-width="1.600"/>
<g transform="translate(13,628)"><use href="#cube"/></g><path d="M15 620V635" stroke="#111" stroke-dasharray="2 1"/><path d="M14.500 624V632" stroke="#3f79b5" stroke-width="2"/>
<path d="M4 642H21" stroke="#bbb"/>
<g transform="translate(12,658)"><path d="M-7-3 0-7 7-3 0 1z" fill="#5b97d5"/><path d="M-7-3 0 1V6L-7 3z" fill="#3f79b5"/></g><path d="M15 664 21 655" stroke="#e2a81e" stroke-width="2.400"/>
<g transform="translate(12,680)"><use href="#cube"/><path d="M-8-3 0-7 8-3 0 1z" fill="#3f79b5"/></g><path d="M15 686 21 677" stroke="#e2a81e" stroke-width="2.400"/>
<g transform="translate(12,702)"><use href="#cube"/><path d="M-8-3 0-7 8-3 0 1z" fill="#3f79b5"/></g><path d="M12 702 21 709M21 702 12 709" stroke="#e05a3a" stroke-width="2.200"/>
<path d="M4 716H21" stroke="#bbb"/>
<g transform="translate(13,731)"><use href="#cube"/><path d="M-8-3 0-7 8-3 0 1z" fill="#6d93bd"/></g><path d="M13 722V740" stroke="#111" stroke-dasharray="2 1"/>
<g transform="translate(13,753)"><use href="#cube"/></g><path d="M8 750 14 757M14 750 8 757" stroke="#e05a3a" stroke-width="1.600"/>
<g transform="translate(13,775)"><use href="#cube"/><path d="M-6-1H-2V7H-6zM-1-1H3V5H-1z" stroke="#2f5f8f" fill="#5b97d5"/></g><path d="M15 782 20 778" stroke="#d84a9a" stroke-width="2.200"/>
<g transform="translate(13,795)"><use href="#cube"/></g><path d="M9 800C17 802 21 798 19 794" stroke="#d83a2a" stroke-width="2.200"/><path d="M10 797 6 800 10 804z" fill="#d83a2a"/>
<path d="M4 812H21" stroke="#bbb"/>
<path d="M16 821 19 823.500 22 821M16 825 19 827.500 22 825M16 829 19 831.500 22 829" stroke="#555" stroke-width="1"/>
</g>

<!-- right dots -->
<path d="M1415 138h18" stroke="#c2c2c2" stroke-width="2" stroke-dasharray="2 2"/>
<path d="M1415 334h18" stroke="#c2c2c2" stroke-width="2" stroke-dasharray="2 2"/>

<!-- right toolbar -->
<g>
<path d="M1415.500 342V354M1430.500 342V350M1416 345H1430" stroke="#333" stroke-width="1.200"/><use href="#bolt" x="1428" y="353"/>
<path d="M1416 378 1428 365 1430 370 1420 380z" fill="#b8c8c0" stroke="#8aa09a"/><use href="#bolt" x="1428" y="376"/>
<path d="M1416 390h8M1420 386v8" stroke="#3f79b5" stroke-width="2.200"/><use href="#bolt" x="1428" y="398"/>
<path d="M1418 420 1426 411" stroke="#5a9a84" stroke-width="1.300"/><path d="M1416 419h4M1418 417v4M1424 411h4M1426 409v4" stroke="#3f79b5"/><use href="#bolt" x="1428" y="419"/>
<circle cx="1421" cy="438" r="6.500" stroke="#5a9a84" stroke-width="1.300"/><use href="#bolt" x="1428" y="441"/>
<path d="M1416 468C1417 459 1424 462 1429 454" stroke="#5a9a84" stroke-width="1.300"/><use href="#bolt" x="1428" y="464"/>
<path d="M1416 487 1428 475 1430 479 1419 490z" fill="#5a9a84"/><path d="M1419 480 1425 486" stroke="#9fc0b4" stroke-width="1"/><use href="#bolt" x="1429" y="486"/>
<g transform="translate(1421,504)"><use href="#cube"/></g><use href="#bolt" x="1428" y="508"/>
<g transform="translate(1421,526)"><path d="M-7-3 0-7 7-3V4L0 8-7 4zM-7-3 0 1 7-3M0 1V8" stroke="#5a9a84" stroke-width="1.200"/></g><use href="#bolt" x="1428" y="530"/>
<circle cx="1423" cy="548" r="7.500" fill="#e8a398" stroke="#e29a8e"/><path d="M1418 543 1428 553" stroke="#fff" stroke-width="1.800"/>
<path d="M1415 563H1431" stroke="#bbb"/>
<path d="M1422 570H1430V578H1422z" fill="#8a5ca8"/><path d="M1415.500 575.500H1421.500V583.500H1415.500z" stroke="#ccc" stroke-width="1.200"/><use href="#bolt" x="1427" y="581"/>
<path d="M1415 593H1420V598H1415zM1415 600H1420V605H1415zM1415 607H1420V612H1415z" fill="#3f79b5"/><path d="M1422 593H1425V611H1422" stroke="#222" stroke-width="1.100"/><use href="#bolt" x="1428" y="603"/>
<path d="M1415 615H1420V620H1415zM1415 622H1420V627H1415zM1415 629H1420V634H1415z" fill="#3f79b5"/><path d="M1422 615H1425V633H1422" stroke="#222" stroke-width="1.100"/><path d="M1425 616 1428 614 1431 619 1428 621z" stroke="#3f79b5"/><use href="#bolt" x="1427" y="625"/>
<path d="M1415 637H1431" stroke="#bbb"/>
<path d="M1415 645H1419V649H1415z" fill="#d84a3a"/><path d="M1420.500 645H1424.500V649H1420.500z" fill="#c8a020"/><path d="M1426 645H1430V649H1426z" fill="#5a9a84"/><path d="M1415 651H1419V655H1415z" fill="#3f79b5"/><path d="M1420.500 651H1424.500V655H1420.500z" fill="#c8288a"/><use href="#bolt" x="1428" y="655"/>
<path d="M1415 670 1423 666 1431 670 1423 674zM1415 675 1423 671 1431 675 1423 679zM1415 680 1423 676 1431 680 1423 684z" fill="#3f79b5" stroke="#f0f0f0" stroke-width=".5"/><use href="#bolt" x="1428" y="677"/>
<circle cx="1421" cy="696" r="6.500" fill="#eab0a6" stroke="#e29a8e"/><path d="M1416 691 1426 701" stroke="#fff" stroke-width="1.600"/><path d="M1427 692 1424 698h2.500L1424 703 1430 696.500h-2.500L1430 692z" fill="#e8dca8"/>
<path d="M1413 711H1431" stroke="#bbb"/>
</g>

<!-- annotation arrow -->
<path d="M348 356 178 228" stroke="#f00" stroke-width="1"/><path d="M172 223 182 227 177 233z" fill="#f00"/>

<!-- triad -->
<path d="M437 751V716" stroke="#0e0" stroke-width="1.300"/><path d="M437 712 434.500 728H440z" fill="#0a8a20"/>
<path d="M437 751H470" stroke="#e8a0a0" stroke-width="2"/><path d="M437 751H470" stroke="#a01010"/><path d="M472 751 459 748.500V754z" fill="#900"/>
<text x="434.500" y="714" font-family="Liberation Sans" font-size="12" font-weight="bold" fill="#2be22b">Y</text>
<text x="476" y="756" font-family="Liberation Sans" font-size="12" font-weight="bold" fill="#f00">X</text>

<!-- scale -->
<path d="M1290.500 772V795M1386.500 772V795M1291 784.500H1386" stroke="#111" stroke-width="1"/>

<!-- status icons -->
<path d="M951.500 840.500H958.500V846.500H951.500zM955 844H962V850H955z" stroke="#222" fill="#f0f0f0" transform="translate(-2,0)"/><rect x="943" y="851" width="27" height="6" fill="#000080"/>
<path d="M985 842 990 840 995 842V848L990 850 985 848z" fill="#777"/><path d="M990 842 995 842V848L990 850z" fill="#555"/><rect x="976" y="851" width="28" height="6" fill="#808080"/>
<path d="M1016 842 1028 840V847L1016 849z" stroke="#888" fill="#ddd"/><path d="M1022 841V848M1016 845 1028 843" stroke="#888"/><rect x="1009" y="851" width="28" height="6" fill="#ff7f40"/>
<path d="M926 847h8l-4 4z" fill="#111"/><path d="M1157 847h8l-4 4z" fill="#111"/>
<path d="M1043 840V857" stroke="#222"/>

<!-- watermark -->
<text x="1220" y="853" font-family="Noto Sans CJK SC" font-size="17" font-weight="bold" fill="#fff" stroke="#f01818" stroke-width="1.800" paint-order="stroke" textLength="52">三维网</text>
<text x="1272" y="853" font-family="DejaVu Sans" font-size="15" font-weight="bold" fill="#fff" stroke="#f01818" stroke-width="1.800" paint-order="stroke" textLength="148" lengthAdjust="spacingAndGlyphs">www.3dportal.cn</text>
</svg>
</body></html>
